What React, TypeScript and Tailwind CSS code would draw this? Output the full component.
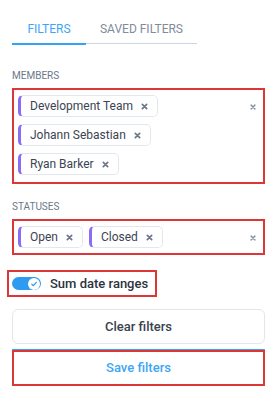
import type { ReactNode } from 'react'

const members = ['Development Team', 'Johann Sebastian', 'Ryan Barker']
const statuses = ['Open', 'Closed']

function XIcon({ className = '' }: { className?: string }) {
  return (
    <svg viewBox="0 0 8 8" className={className} fill="none" stroke="currentColor" strokeWidth="1.9" strokeLinecap="round">
      <path d="M1.5 1.5 6.5 6.5M6.5 1.5 1.5 6.5" />
    </svg>
  )
}

function Chip({ label }: { label: string }) {
  return (
    <span className="flex h-[22px] items-center gap-[8px] rounded-[5px] border border-[#e3e8ef] border-l-[3px] border-l-[#8b6cf4] pl-[9px] pr-[9px] text-[12px] text-[#3b4452]">
      {label}
      <XIcon className="h-[7px] w-[7px] text-[#6b7688]" />
    </span>
  )
}

function Picker({ children, className = '' }: { children: ReactNode; className?: string }) {
  return (
    <div className={`relative border-2 border-[#dc3636] pl-1 pr-7 ${className}`}>
      <div className="flex flex-wrap gap-x-[6px] gap-y-[7px]">{children}</div>
      <XIcon className="absolute right-[7px] top-[14px] h-[6px] w-[6px] text-[#8a94a3]" />
    </div>
  )
}

export default function App() {
  return (
    <div className="h-[395px] w-[277px] bg-white px-3 pt-[21px] font-['Roboto',sans-serif]">
      {/* Tabs */}
      <div className="flex w-[185px] border-b border-[#c9d6ea]">
        <button className="-mb-[2px] w-[74px] border-b-2 border-[#36a2f3] pb-[6px] text-[12px] leading-4 text-[#3ea6f3]">
          FILTERS
        </button>
        <button className="flex-1 pb-[6px] text-[12px] leading-4 text-[#808b9b]">SAVED FILTERS</button>
      </div>

      <div className="mb-[6px] mt-[26px] text-[10px] leading-3 text-[#6b7889]">MEMBERS</div>
      <Picker className="pb-[7px] pt-[5px]">
        {members.map((m) => (
          <Chip key={m} label={m} />
        ))}
      </Picker>

      <div className="mb-[6px] mt-[17px] text-[10px] leading-3 text-[#6b7889]">STATUSES</div>
      <Picker className="pb-[5px] pt-[5px]">
        {statuses.map((s) => (
          <Chip key={s} label={s} />
        ))}
      </Picker>

      {/* Toggle */}
      <div className="-ml-[5px] mt-[15px] inline-flex h-[27px] items-center gap-[9px] border-2 border-[#dc3636] pl-[3px] pr-[7px]">
        <span className="flex h-[13px] w-[29px] items-center justify-end rounded-full bg-[#2f9bf0] pr-[1px]">
          <span className="flex h-[12px] w-[12px] items-center justify-center rounded-full bg-white">
            <svg viewBox="0 0 10 10" className="h-[8px] w-[8px]" fill="none" stroke="#2f9bf0" strokeWidth="1.6" strokeLinecap="round" strokeLinejoin="round">
              <path d="M2.2 5.2 4.2 7.1 7.9 3" />
            </svg>
          </span>
        </span>
        <span className="text-[13px] font-medium text-[#2d3340]">Sum date ranges</span>
      </div>

      {/* Buttons */}
      <button className="mt-3 flex h-[35px] w-full items-center justify-center rounded-[6px] border border-[#e2e6ee] text-[13px] font-medium text-[#3a4250]">
        Clear filters
      </button>
      <div className="mt-[5px] h-px w-full rounded-full bg-[#36a2f3]" />
      <button className="flex h-[36px] w-full items-center justify-center border-2 border-[#dc3636] text-[13px] font-medium text-[#3ea6f3]">
        Save filters
      </button>
    </div>
  )
}
